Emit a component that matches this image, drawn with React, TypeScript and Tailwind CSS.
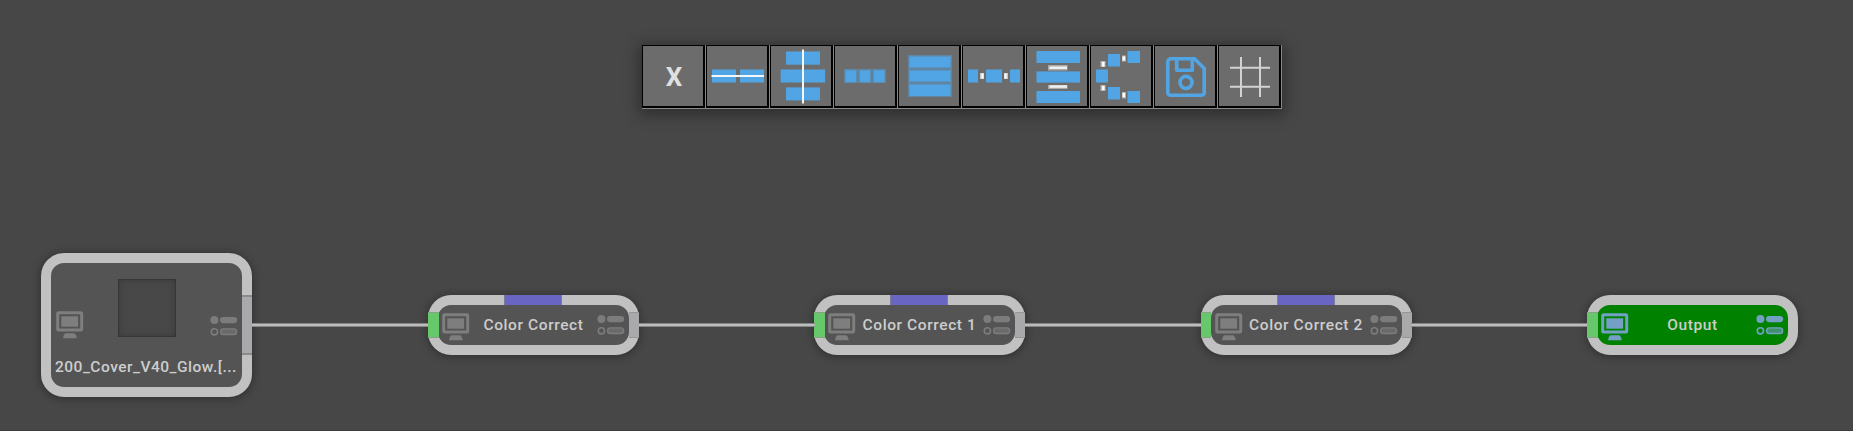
import type { ReactNode } from "react";

const BLUE = "#51a5e5";

type R = [number, number, number, number];

function Rects({ items, fill = BLUE, opacity = 1 }: { items: R[]; fill?: string; opacity?: number }) {
  return (
    <g fill={fill} opacity={opacity}>
      {items.map(([x, y, w, h], i) => (
        <rect key={i} x={x} y={y} width={w} height={h} />
      ))}
    </g>
  );
}

const icons: ReactNode[] = [
  <>
    <Rects items={[[6, 24.5, 24, 13], [34, 24.5, 24, 13]]} />
    <Rects items={[[5.5, 30, 52.5, 2]]} fill="#f4f6f8" />
  </>,
  <>
    <Rects items={[[16, 6.5, 34, 13.2], [10.6, 24.5, 44.5, 13], [16, 42.4, 34, 13]]} />
    <Rects items={[[32, 4.5, 2, 54]]} fill="#f4f6f8" />
  </>,
  <>
    <Rects items={[[10, 24, 42, 14]]} opacity={0.38} />
    <Rects items={[[12, 26, 10, 10.5], [26, 26, 10, 10.5], [40, 26, 10, 10.5]]} />
    <Rects items={[[11, 24.6, 11.5, 13], [25.5, 24.6, 11, 13], [39.5, 24.6, 11.5, 13]]} opacity={0.6} />
  </>,
  <>
    <Rects items={[[10, 10, 44, 42]]} opacity={0.45} />
    <Rects items={[[12, 12, 40, 10], [12, 26, 40, 10], [12, 40, 40, 11]]} />
    <Rects items={[[11, 11, 42, 12], [11, 25, 42, 12], [11, 39, 42, 12]]} opacity={0.5} />
  </>,
  <>
    <Rects items={[[6, 24.5, 10, 13], [24, 24.5, 16, 13], [48, 24.5, 10, 13]]} />
    <Rects items={[[18, 28, 4, 6], [42, 28, 4, 6]]} fill="#c9c9c9" />
    <Rects items={[[19.5, 28.5, 2, 5], [42.5, 28.5, 2, 5]]} fill="#fff" />
  </>,
  <>
    <Rects items={[[10.5, 6, 43.5, 12], [10.5, 26.4, 43.5, 11.2], [10.5, 46, 43.5, 12]]} />
    <Rects items={[[22, 20, 19.5, 5.5], [22, 40, 19.5, 4]]} fill="#aaa" />
    <Rects items={[[23.5, 21.5, 17.5, 2.5], [23.5, 40.3, 17.5, 2.5]]} fill="#f0f0f0" />
  </>,
  <>
    <Rects items={[[6, 24.5, 12, 13], [18, 9, 12, 12.5], [37.5, 6, 12.5, 12], [18, 42, 12, 12.5], [37.5, 46, 12.5, 12]]} />
    <Rects items={[[10.5, 16, 5, 6], [32, 10.5, 4, 6], [10.5, 40, 5, 6], [32, 47, 4, 6.5]]} fill="#b5b5b5" />
    <Rects items={[[12, 17, 2.5, 4.5], [32.5, 11.5, 2.5, 4], [12, 41, 2.5, 4], [32.5, 48, 2.5, 4]]} fill="#fff" />
  </>,
  <g fill="none" stroke={BLUE} strokeWidth="3.6" strokeLinejoin="round">
    <path d="M17 13.8H40.5L50.2 23.5V47.5A2.8 2.8 0 0 1 47.5 50.2H16.5A2.8 2.8 0 0 1 13.8 47.5V17A3.2 3.2 0 0 1 17 13.8Z" />
    <path d="M22.7 14V25.3H38.3V14" />
    <circle cx="32" cy="37.4" r="6" />
  </g>,
  <path d="M23 12V52M42 12V52M12 22.7H52M12 41.7H52" fill="none" stroke="#d2d2d2" strokeWidth="2" />,
];

function ToolButton({ children }: { children: ReactNode }) {
  return (
    <div className="h-16 w-16 border-r border-b border-[#898989]">
      <button className="flex h-[63px] w-[63px] items-center justify-center border-t border-r-2 border-b-2 border-l border-black bg-[#6c6c6c]">
        {children}
      </button>
    </div>
  );
}

function Toolbar() {
  return (
    <div className="flex w-[640px] shadow-[0_3px_14px_3px_rgba(0,0,0,0.35)]">
      <ToolButton>
        <span className="pt-0.5 pl-0.5 text-[26px] leading-none font-bold text-[#e0e0e0] font-['Roboto',sans-serif]">X</span>
      </ToolButton>
      {icons.map((icon, i) => (
        <ToolButton key={i}>
          <svg viewBox="1 1 60 60" className="h-[60px] w-[60px]">
            {icon}
          </svg>
        </ToolButton>
      ))}
    </div>
  );
}

function Monitor({ active }: { active?: boolean }) {
  const c = active ? "#73a0c4" : "#7e7e7e";
  return (
    <svg viewBox="0 0 28 28" className="h-7 w-7 shrink-0">
      <rect x="1.7" y="1.7" width="24" height="17.4" rx="1" fill="none" stroke={c} strokeWidth="3" />
      <rect x="5.3" y="5.3" width="16.8" height="10.4" fill={c} />
      <path d="M9.3 22.3H18.3Q20.2 23.5 20.8 27.3H7Q7.5 23.5 9.3 22.3Z" fill={c} />
    </svg>
  );
}

function Toggles({ active }: { active?: boolean }) {
  const c = active ? "#73a0c4" : "#7c7c7c";
  return (
    <svg viewBox="0 0 28 22" className="h-[22px] w-7 shrink-0">
      <circle cx="4.4" cy="5" r="4" fill={c} />
      <rect x="10" y="1.9" width="17.2" height="6.3" rx="3.1" fill={c} />
      <circle cx="4.4" cy="16.8" r="3.1" fill="none" stroke={c} strokeWidth="1.6" />
      <rect x="10.6" y="13.9" width="16" height="5.6" rx="2.8" fill={c} fillOpacity="0.55" stroke={c} strokeWidth="1.4" />
    </svg>
  );
}

const shell = "absolute w-[211px] rounded-[23px] border-[10px] border-[#c1c1c1] shadow-[0_1px_8px_1px_rgba(0,0,0,0.32)]";
const labelText = "font-['Roboto',sans-serif] text-[15.5px] font-medium whitespace-nowrap text-[#cdcdcd]";

function EffectNode({ label, place, kind }: { label: string; place: string; kind: "effect" | "output" }) {
  const out = kind === "output";
  return (
    <div className={`${shell} top-[295px] h-[60px] ${place} ${out ? "bg-[#008200]" : "bg-[#545454]"}`}>
      <div className="flex h-10 items-center justify-between pr-1 pl-1">
        <div className="pt-1">
          <Monitor active={out} />
        </div>
        <span className={`${labelText} pt-px leading-none tracking-[0.6px]`}>{label}</span>
        <Toggles active={out} />
      </div>
      <div className="absolute top-[7px] -left-[10px] h-[26px] w-[10.5px] border-y border-[#86a386] bg-[#66c76b]" />
      {!out && (
        <>
          <div className="absolute top-[7px] -right-[10px] h-[26px] w-[10px] border-y border-[#969696] bg-[#a9a9ab]" />
          <div className="absolute -top-[10px] left-[66px] h-[10px] w-[58px] border-x border-[#7d7d9a] bg-[#6866c2]" />
        </>
      )}
    </div>
  );
}

function ClipNode() {
  return (
    <div className={`${shell} top-[253px] left-[41px] h-36 bg-[#545454]`}>
      <div className="flex h-[124px] flex-col pt-4">
        <div className="flex h-[60px] justify-between pr-1 pl-[5px]">
          <div className="pt-8">
            <Monitor />
          </div>
          <div className="h-[58px] w-[58px] bg-[#484848] shadow-[inset_0_0_9px_rgba(0,0,0,0.22),inset_0_0_1px_1px_rgba(0,0,0,0.15)]" />
          <div className="pt-9">
            <Toggles />
          </div>
        </div>
        <div className={`${labelText} pt-[18px] pl-1 leading-5 tracking-[0.5px]`}>
          200_Cover_V40_Glow.[...
        </div>
      </div>
      <div className="absolute top-8 -right-[10px] h-[60px] w-[10px] border-y-2 border-[#8b8b8b] bg-[#a9a9ac]" />
    </div>
  );
}

const wires = ["left-[252px] w-[176px]", "left-[639px] w-[176px]", "left-[1025px] w-[176px]", "left-[1411px] w-[176px]"];

export default function App() {
  return (
    <main className="relative h-[431px] w-[1853px] overflow-hidden bg-[#474747] font-['Inter','Liberation_Sans',sans-serif]">
      <div className="flex pt-[45px] pl-[642px]">
        <Toolbar />
      </div>
      <ClipNode />
      <EffectNode label="Color Correct" place="left-[428px]" kind="effect" />
      <EffectNode label="Color Correct 1" place="left-[814px]" kind="effect" />
      <EffectNode label="Color Correct 2" place="left-[1200.5px]" kind="effect" />
      <EffectNode label="Output" place="left-[1587px]" kind="output" />
      {wires.map((w) => (
        <div key={w} className={`absolute top-[323px] h-1 border-y border-[#858585] bg-[#bcbcbc] ${w}`} />
      ))}
      <div className="absolute bottom-0 left-0 h-px w-full bg-[#3c3c3c]" />
    </main>
  );
}
